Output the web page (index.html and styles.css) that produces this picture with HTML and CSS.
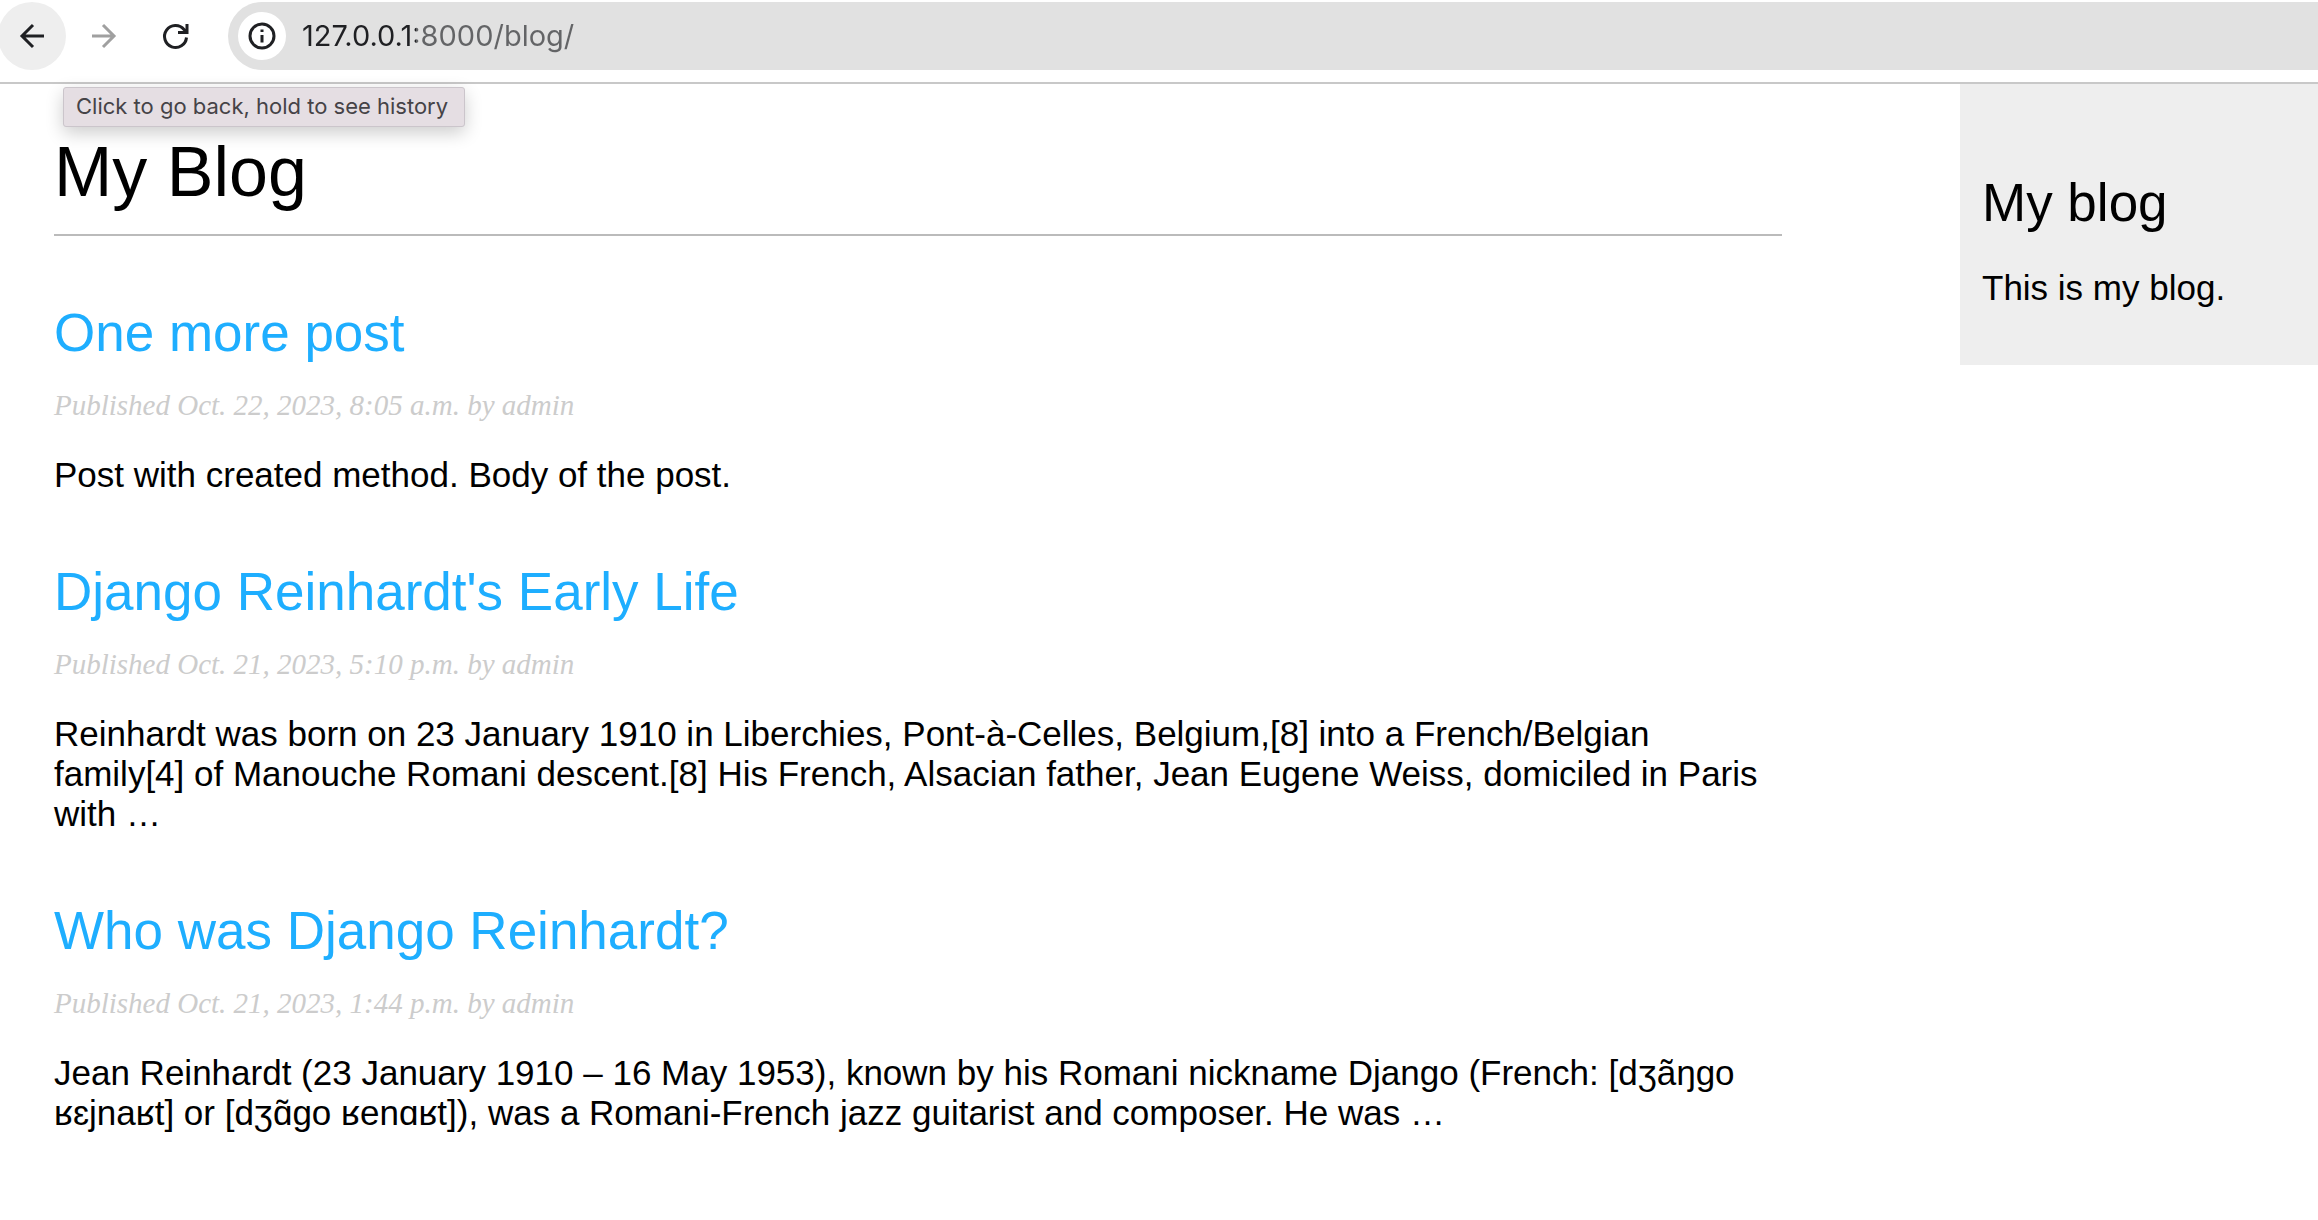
FILE: index.html
```html
<!DOCTYPE html>
<html lang="en">
<head>
<meta charset="utf-8">
<meta name="viewport" content="width=device-width, initial-scale=1">
<title>My Blog</title>
<link rel="stylesheet" href="styles.css">
</head>
<body>
<header class="toolbar">
  <button class="nav-button nav-button-active" type="button" aria-label="Back" aria-describedby="back-tip">
    <svg class="icon" viewBox="0 0 32 32"><path d="M28 16H6M17 5L6 16L17 27" /></svg>
  </button>
  <button class="nav-button nav-button-disabled" type="button" aria-label="Forward" disabled>
    <svg class="icon" viewBox="0 0 32 32"><path d="M4 16H26M15 5L26 16L15 27" /></svg>
  </button>
  <button class="nav-button" type="button" aria-label="Reload">
    <svg class="icon" viewBox="0 0 32 32"><path d="M26.500 17.500A11 11 0 1 1 24 9.500L26 11.500M27 4V12.500H18" /></svg>
  </button>
  <div class="address">
    <button class="site-info" type="button" aria-label="View site information">
      <svg class="info-icon" viewBox="0 0 28 28"><circle cx="14" cy="14" r="12" /><path d="M14 13V20.500M14 7.500V10" /></svg>
    </button>
    <input class="url" type="text" value="127.0.0.1:8000/blog/" aria-label="Address">
  </div>
  <div class="tooltip" id="back-tip" role="tooltip">Click to go back, hold to see history</div>
</header>
<div class="page">
  <main class="content">
    <h1 class="title">My Blog</h1>
    <article class="post">
      <h2 class="heading"><a class="link" href="#one-more-post">One more post</a></h2>
      <p class="date">Published Oct. 22, 2023, 8:05 a.m. by admin</p>
      <p class="text">Post with created method. Body of the post.</p>
    </article>
    <article class="post">
      <h2 class="heading"><a class="link" href="#early-life">Django Reinhardt's Early Life</a></h2>
      <p class="date">Published Oct. 21, 2023, 5:10 p.m. by admin</p>
      <p class="text">Reinhardt was born on 23 January 1910 in Liberchies, Pont-à-Celles, Belgium,[8] into a French/Belgian family[4] of Manouche Romani descent.[8] His French, Alsacian father, Jean Eugene Weiss, domiciled in Paris with …</p>
    </article>
    <article class="post">
      <h2 class="heading"><a class="link" href="#who-was-django">Who was Django Reinhardt?</a></h2>
      <p class="date">Published Oct. 21, 2023, 1:44 p.m. by admin</p>
      <p class="text">Jean Reinhardt (23 January 1910 – 16 May 1953), known by his Romani nickname Django (French: [dʒãŋgo ʁɛjnaʁt] or [dʒɑ̃go ʁenɑʁt]), was a Romani-French jazz guitarist and composer. He was …</p>
    </article>
  </main>
  <aside class="sidebar">
    <h2 class="heading">My blog</h2>
    <p class="text">This is my blog.</p>
  </aside>
</div>
</body>
</html>
```

FILE: styles.css
```css
* {
  box-sizing: border-box;
}

body {
  margin: 0;
  background: #fff;
  color: #000;
  font-family: "Liberation Sans", Arial, sans-serif;
}

/* Browser toolbar */
.toolbar {
  position: relative;
  display: flex;
  align-items: center;
  gap: 4px;
  padding: 2px 0 12px;
  border-bottom: 2px solid #c8c8c8;
}

.nav-button {
  display: flex;
  align-items: center;
  justify-content: center;
  flex: none;
  width: 68px;
  height: 68px;
  padding: 0;
  border: 0;
  border-radius: 50%;
  background: none;
  color: #1f2023;
}

.nav-button-active {
  margin-left: -2px;
  background: #eee;
}

.nav-button-disabled {
  color: #a0a0a0;
}

.icon {
  width: 32px;
  height: 32px;
  fill: none;
  stroke: currentColor;
  stroke-width: 3;
}

.address {
  display: flex;
  align-items: center;
  flex: 1;
  gap: 16px;
  height: 68px;
  margin-left: 14px;
  padding-left: 10px;
  border-radius: 34px 0 0 34px;
  background: #e1e1e1;
}

.site-info {
  display: flex;
  align-items: center;
  justify-content: center;
  flex: none;
  width: 48px;
  height: 48px;
  padding: 0;
  border: 0;
  border-radius: 50%;
  background: #fff;
  color: #1f2023;
}

.info-icon {
  width: 28px;
  height: 28px;
  fill: none;
  stroke: currentColor;
  stroke-width: 3;
}

/* The host is dark and the port and path are grey */
.url {
  flex: 1;
  min-width: 0;
  padding: 0;
  border: 0;
  outline: 0;
  background: linear-gradient(to right, #1f2023 114px, #636466 114px);
  background-clip: text;
  -webkit-background-clip: text;
  color: transparent;
  font: 29px/40px Inter, sans-serif;
}

.tooltip {
  position: absolute;
  top: 87px;
  left: 63px;
  padding: 4px 16px 6px 12px;
  border: 1px solid #cbc5cb;
  border-radius: 3px;
  background: #e5dee3;
  box-shadow: 0 6px 18px rgba(0, 0, 0, 0.2);
  color: #454347;
  font: 22px/28px Inter, sans-serif;
  white-space: nowrap;
}

/* Blog */
.page {
  display: grid;
  grid-template-columns: 1fr 358px;
  align-items: start;
}

.content {
  padding: 48px 178px 64px 54px;
}

.title {
  margin: 0;
  padding-bottom: 22px;
  border-bottom: 2px solid #bbb;
  font-size: 70px;
  font-weight: 400;
  line-height: 80px;
}

.post {
  padding-top: 67px;
}

.heading {
  margin: 0;
  font-size: 53px;
  font-weight: 400;
  line-height: 60px;
}

.link {
  color: #1eaeff;
  text-decoration: none;
}

.date {
  margin: 27px 0 0;
  color: #ccc;
  font: italic 29px/30px Georgia, "Liberation Serif", serif;
}

.text {
  margin: 35px 0 0;
  font-size: 35px;
  line-height: 40px;
}

.sidebar {
  padding: 89px 22px 57px;
  background: #eee;
}
```
